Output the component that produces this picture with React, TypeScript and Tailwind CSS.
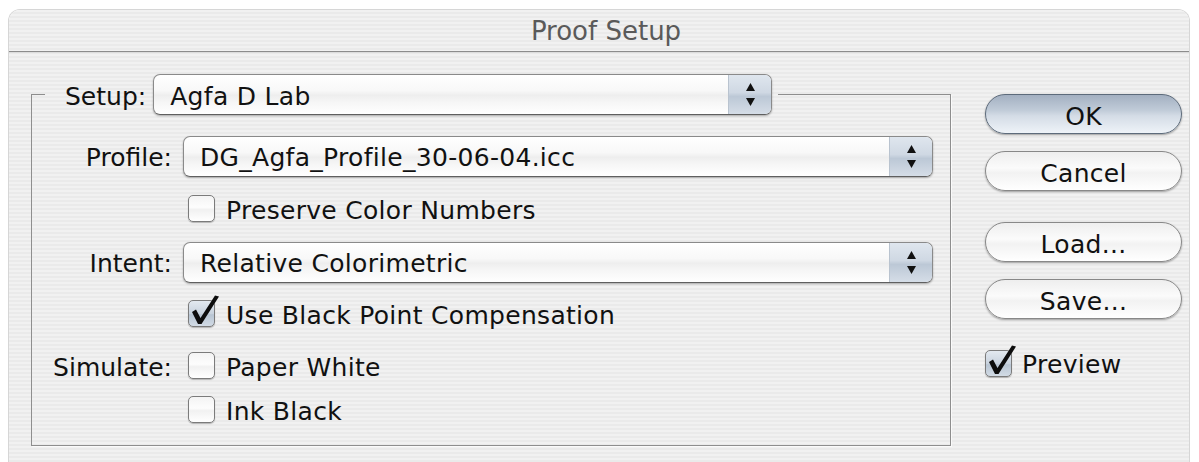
import React from 'react';

// Aqua-style dialog: pinstriped window, grouped popups, glossy pill buttons
const font = "font-['DejaVu_Sans',_'Liberation_Sans',_sans-serif]";
const label = 'pt-[4px] text-[25px] tracking-[0.3px] text-[#111]';
const fieldLabel = 'pt-[4px] text-[25px] text-[#111]';

function Arrows() {
  return (
    <div className="flex w-[43px] flex-col items-center justify-center gap-[7px] border-l border-l-[#b9c3cf] bg-[linear-gradient(180deg,#dfe6ee_0%,#cfd8e3_45%,#bcc8d6_55%,#d5dde7_100%)]">
      <svg width="9" height="8" viewBox="0 0 9 8">
        <path d="M4.5 0 L9 8 L0 8 Z" fill="#111" />
      </svg>
      <svg width="9" height="8" viewBox="0 0 9 8">
        <path d="M0 0 L9 0 L4.5 8 Z" fill="#111" />
      </svg>
    </div>
  );
}

function PopUp({ value, width }: { value: string; width: string }) {
  return (
    <div
      className={`flex h-[41px] ${width} overflow-hidden rounded-[7px] border border-[#8a8a8a] border-b-[#5f5f5f] bg-[linear-gradient(180deg,#ffffff_0%,#f8f8f8_40%,#eeeeee_52%,#f6f6f6_70%,#ffffff_100%)] shadow-[0_1px_2px_rgba(0,0,0,0.3)]`}
    >
      <div className={`flex flex-1 items-center pl-[16px] ${label}`}>{value}</div>
      <Arrows />
    </div>
  );
}

function CheckBox({ checked }: { checked?: boolean }) {
  return (
    <span
      className={`relative inline-block h-[27px] w-[27px] shrink-0 rounded-[5px] border border-[#7b7b7b] shadow-[0_1px_1px_rgba(0,0,0,0.25)] ${
        checked
          ? 'bg-[linear-gradient(180deg,#e3e9f0_0%,#c9d3de_50%,#b8c5d3_55%,#d2dbe5_100%)]'
          : 'bg-[linear-gradient(180deg,#f4f4f4_0%,#fdfdfd_45%,#f1f1f1_55%,#ffffff_100%)]'
      }`}
    >
      {checked && (
        <svg className="absolute left-[-1px] top-[-8px]" width="34" height="36" viewBox="0 0 34 36">
          <path d="M4 19 L8 16.5 L12.5 25 L27 2.5 L31 3.5 L13.5 31 L10 31 Z" fill="#0d0d0d" />
        </svg>
      )}
    </span>
  );
}

function Row({ text, children, className }: { text?: string; children: React.ReactNode; className?: string }) {
  return (
    <div className={`flex items-center ${className ?? ''}`}>
      <div className={`w-[140px] text-right ${fieldLabel}`}>{text}</div>
      <div className="ml-[11px] flex items-center">{children}</div>
    </div>
  );
}

function CheckRow({ text, caption, checked, className }: { text?: string; caption: string; checked?: boolean; className?: string }) {
  return (
    <Row text={text} className={`h-[28px] ${className ?? ''}`}>
      <div className="ml-[5px] flex items-center gap-[11px]">
        <CheckBox checked={checked} />
        <span className={label}>{caption}</span>
      </div>
    </Row>
  );
}

function PillButton({ caption, primary, className }: { caption: string; primary?: boolean; className?: string }) {
  return (
    <button
      className={`h-[40px] w-[197px] rounded-full border pt-[3px] text-[25px] tracking-[0.3px] text-[#111] shadow-[0_1px_2px_rgba(0,0,0,0.35)] ${
        primary
          ? 'border-[#5d6b7b] bg-[linear-gradient(180deg,#a3b0c1_0%,#c0cbd8_40%,#d4dce6_55%,#eef3f8_100%)]'
          : 'border-[#888] bg-[linear-gradient(180deg,#eeeeee_0%,#fbfbfb_42%,#f2f2f2_55%,#ffffff_100%)]'
      } ${className ?? ''}`}
    >
      {caption}
    </button>
  );
}

export default function App() {
  return (
    <div className={`h-[462px] w-[1199px] overflow-hidden bg-white ${font}`}>
      <div className="ml-[9px] mt-[10px] h-[460px] w-[1180px] rounded-t-[11px] bg-[repeating-linear-gradient(180deg,#f1f1f1_0px,#f1f1f1_2px,#eaeaea_2px,#eaeaea_4px)] shadow-[0_0_0_1px_#d6d6d6]">
        {/* title bar */}
        <div className="flex h-[42px] items-center justify-center border-b border-b-[#8c8c8c] pl-[14px] pt-[2px] text-[26px] text-[#5a5a5a]">
          Proof Setup
        </div>
        <div className="h-[1px] bg-[#dcdcdc]" />

        <div className="flex items-start pl-[22px] pt-[21px]">
          <fieldset className="w-[920px] border border-[#8e8e8e] px-0 pb-[21px] pt-[20px] shadow-[1px_1px_0_#fafafa]">
            <legend className="ml-[13px] pl-[20px] pr-[6px]">
              <div className="flex items-center gap-[7px]">
                <span className={fieldLabel}>Setup:</span>
                <PopUp value="Agfa D Lab" width="w-[619px]" />
              </div>
            </legend>

            <div className="flex flex-col">
              <Row text="Profile:" className="h-[41px]">
                <PopUp value="DG_Agfa_Profile_30-06-04.icc" width="w-[750px]" />
              </Row>
              <CheckRow caption="Preserve Color Numbers" className="mt-[18px]" />
              <Row text="Intent:" className="mt-[19px] h-[41px]">
                <PopUp value="Relative Colorimetric" width="w-[750px]" />
              </Row>
              <CheckRow caption="Use Black Point Compensation" checked className="mt-[17px]" />
              <CheckRow text="Simulate:" caption="Paper White" className="mt-[24px]" />
              <CheckRow caption="Ink Black" className="mt-[16px]" />
            </div>
          </fieldset>

          <div className="ml-[34px] mt-[20px] flex flex-col">
            <PillButton caption="OK" primary />
            <PillButton caption="Cancel" className="mt-[17px]" />
            <PillButton caption="Load..." className="mt-[31px]" />
            <PillButton caption="Save..." className="mt-[17px]" />
            <div className="mt-[30px] flex h-[28px] items-center gap-[10px]">
              <CheckBox checked />
              <span className={label}>Preview</span>
            </div>
          </div>
        </div>
      </div>
    </div>
  );
}
